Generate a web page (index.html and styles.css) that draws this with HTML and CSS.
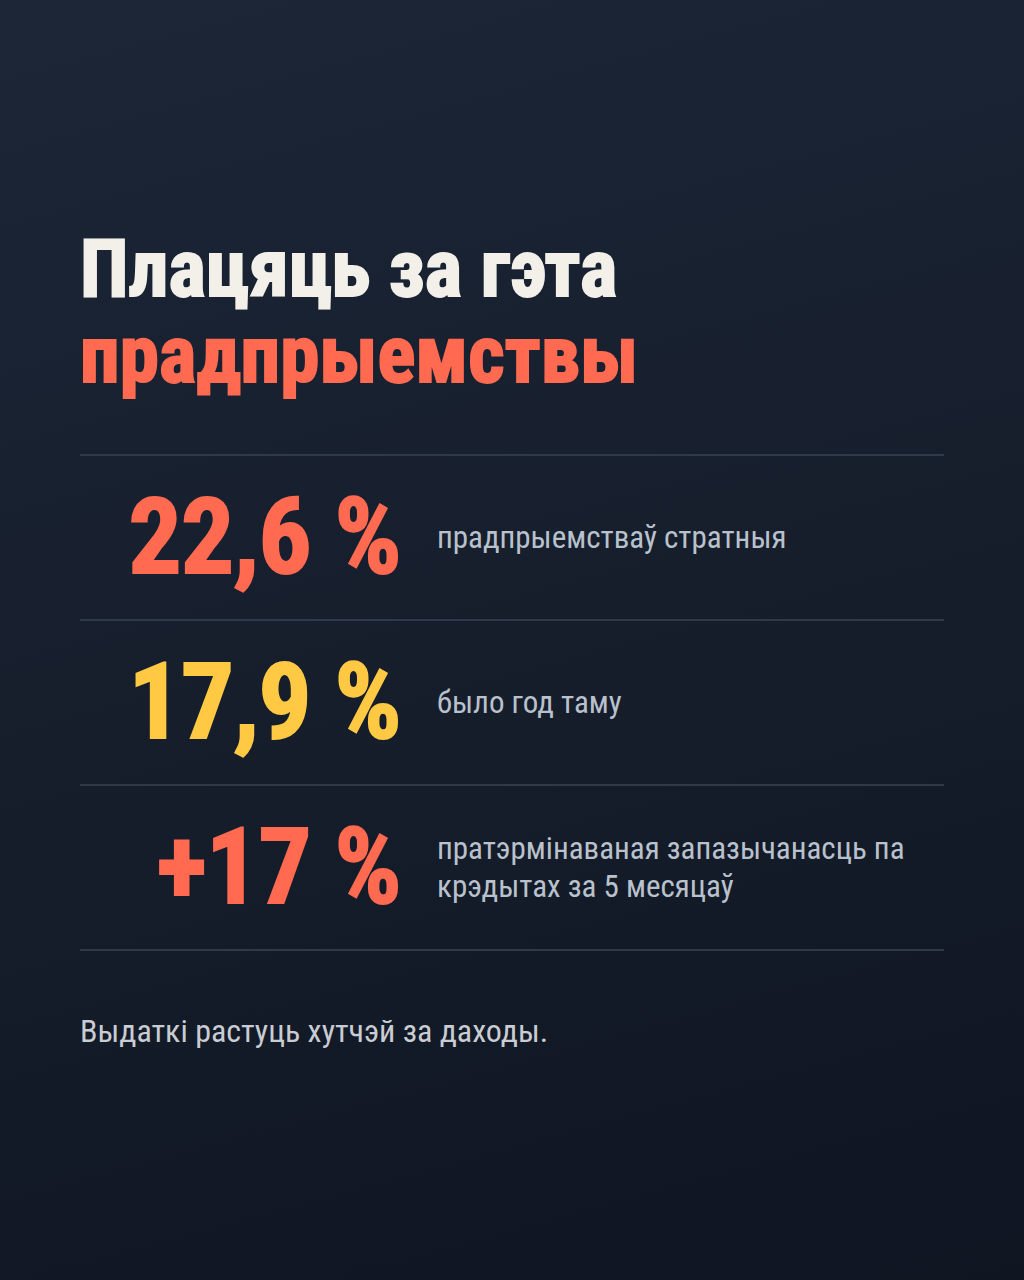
FILE: index.html
```html
<!DOCTYPE html>
<html lang="be">
<head>
<meta charset="utf-8">
<link rel="stylesheet" href="styles.css">
</head>
<body>
<main class="page">
  <h1 class="title">
    <span class="title-line">Плацяць за гэта</span>
    <span class="title-line accent">прадпрыемствы</span>
  </h1>
  <section class="stats">
    <div class="stat">
      <div class="num red">22,6 %</div>
      <div class="label">прадпрыемстваў стратныя</div>
    </div>
    <div class="stat">
      <div class="num yellow">17,9 %</div>
      <div class="label">было год таму</div>
    </div>
    <div class="stat">
      <div class="num red">+17 %</div>
      <div class="label">пратэрмінаваная запазычанасць па<br>крэдытах за 5 месяцаў</div>
    </div>
  </section>
  <p class="note">Выдаткі растуць хутчэй за даходы.</p>
</main>
</body>
</html>
```

FILE: styles.css
```css
* { box-sizing: border-box; }
html, body { margin: 0; padding: 0; }
body {
  width: 1024px;
  height: 1280px;
  overflow: hidden;
  font-family: "Roboto Condensed", "Roboto", "Liberation Sans", sans-serif;
}
.page {
  width: 1024px;
  height: 1280px;
  padding: 226px 80px 0 80px;
  background: linear-gradient(165deg, #1c2637 0%, #161e2c 50%, #0f1521 100%);
}
.title {
  margin: 0;
  font-size: 79px;
  line-height: 86px;
  font-weight: 700;
  color: #f3f0ea;
  letter-spacing: 0.2px;
  -webkit-text-stroke: 2px currentColor;
}
.title-line { display: block; }
.accent { color: #ff6a50; }
.stats {
  margin-top: 56px;
  border-top: 2px solid #2e3949;
}
.stat {
  display: grid;
  grid-template-columns: 321px 1fr;
  column-gap: 36px;
  align-items: center;
  height: 165px;
  border-bottom: 2px solid #2e3949;
}
.num {
  text-align: right;
  font-size: 105px;
  line-height: 1;
  font-weight: 700;
  letter-spacing: -0.6px;
  white-space: nowrap;
  -webkit-text-stroke: 2px currentColor;
}
.red { color: #ff6a50; }
.yellow { color: #ffc943; }
.label {
  font-size: 31px;
  line-height: 38px;
  color: #b9c1cc;
}
.note {
  margin: 60px 0 0 0;
  font-size: 32px;
  line-height: 40px;
  color: #c9ccd2;
}
```
